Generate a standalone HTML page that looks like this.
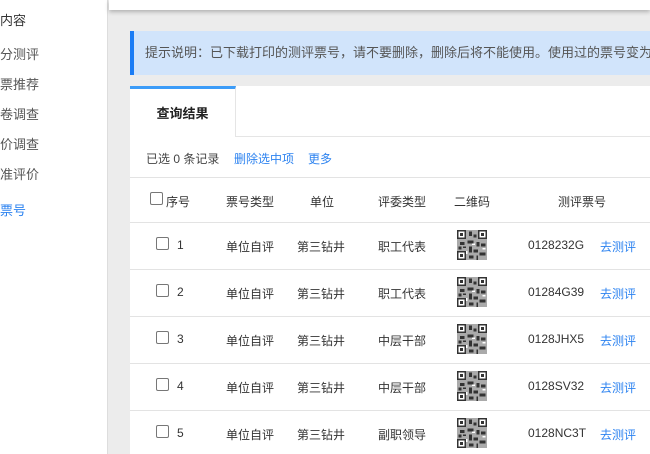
<!DOCTYPE html>
<html><head><meta charset="utf-8"><style>
*{margin:0;padding:0;box-sizing:border-box}
body{width:650px;height:454px;overflow:hidden;background:#ececec;font-family:"Liberation Sans","Noto Sans CJK SC",sans-serif;font-size:12px;color:#333;position:relative}
.a{position:absolute;white-space:nowrap}
.side{position:absolute;left:0;top:0;width:108px;height:454px;background:#fff;border-right:1px solid #ddd}
.side div{position:absolute;left:0;font-size:13px;color:#555}
.top{position:absolute;left:109px;top:0;width:541px;height:10px;background:#fff;box-shadow:0 2px 4px rgba(0,0,0,.25)}
.alert{position:absolute;left:130px;top:31px;width:520px;height:44px;background:#d1e4fb;border-left:4px solid #1a7cf5;font-size:13px;color:#555;line-height:44px;padding-left:11px;white-space:nowrap;overflow:hidden}
.card{position:absolute;left:130px;top:86px;width:520px;height:368px;background:#fff}
.tab{position:absolute;left:0;top:0;width:106px;height:51px;border-top:3px solid #3c9cf8;border-right:1px solid #e5e5e5;background:#fff;font-size:13px;font-weight:bold;color:#222;text-align:center;line-height:50px}
.tabline{position:absolute;left:106px;top:50px;width:414px;height:1px;background:#e5e5e5}
.line{position:absolute;left:0;width:520px;height:1px;background:#e3e3e3}
.cb{position:absolute;width:13px;height:13px;border:1px solid #777;border-radius:2px;background:#fff}
.blue{color:#2d83f0}
.qr{position:absolute;left:327px;width:30px;height:30px}
</style></head><body>
<div class="side">
<div style="top:10px;color:#333">内容</div>
<div style="top:44px">分测评</div>
<div style="top:74px">票推荐</div>
<div style="top:104px">卷调查</div>
<div style="top:134px">价调查</div>
<div style="top:164px">准评价</div>
<div style="top:200px;color:#2d83f0">票号</div>
</div>
<div class="top"></div>
<div class="alert">提示说明：已下载打印的测评票号，请不要删除，删除后将不能使用。使用过的票号变为</div>
<svg width="0" height="0" style="position:absolute"><defs><symbol id="q" viewBox="0 0 20 20">
<rect width="20" height="20" fill="#aaa"/>
<g fill="#333"><rect x="0" y="0" width="6" height="6"/><rect x="14" y="0" width="6" height="6"/><rect x="0" y="14" width="6" height="6"/>
<rect x="8" y="1" width="2" height="3"/><rect x="11" y="3" width="2" height="2"/><rect x="2" y="8" width="3" height="2"/><rect x="7" y="7" width="4" height="2"/><rect x="13" y="8" width="2" height="3"/><rect x="16" y="9" width="3" height="2"/><rect x="8" y="11" width="2" height="4"/><rect x="11" y="13" width="3" height="2"/><rect x="15" y="15" width="4" height="2"/><rect x="8" y="17" width="3" height="2"/><rect x="13" y="17" width="1" height="3"/><rect x="1" y="11" width="2" height="2"/><rect x="4" y="11" width="2" height="1"/></g>
<g fill="#fff"><rect x="1" y="1" width="4" height="4"/><rect x="15" y="1" width="4" height="4"/><rect x="1" y="15" width="4" height="4"/><rect x="10" y="9" width="2" height="1"/><rect x="6" y="14" width="1" height="2"/><rect x="17" y="12" width="2" height="1"/></g>
<g fill="#333"><rect x="2" y="2" width="2" height="2"/><rect x="16" y="2" width="2" height="2"/><rect x="2" y="16" width="2" height="2"/></g>
</symbol></defs></svg>
<div class="card">
<div class="tab">查询结果</div><div class="tabline"></div>
<div class="a" style="left:16px;top:64px;color:#444">已选 0 条记录</div>
<div class="a blue" style="left:104px;top:64px">删除选中项</div>
<div class="a blue" style="left:178px;top:64px">更多</div>
<div class="line" style="top:91px"></div>
<div class="cb" style="left:20px;top:106px"></div>
<div class="a" style="left:36px;top:107px">序号</div>
<div class="a" style="left:96px;top:107px">票号类型</div>
<div class="a" style="left:180px;top:107px">单位</div>
<div class="a" style="left:248px;top:107px">评委类型</div>
<div class="a" style="left:324px;top:107px">二维码</div>
<div class="a" style="left:428px;top:107px">测评票号</div>
<div class="line" style="top:136px"></div>
</div>
<div id="rows"></div>
<script>
var d=[["1","职工代表","0128232G"],["2","职工代表","01284G39"],["3","中层干部","0128JHX5"],["4","中层干部","0128SV32"],["5","副职领导","0128NC3T"]];
var h="";d.forEach(function(r,i){var t=86+136+i*47;
h+='<div class="cb" style="left:'+(130+26)+'px;top:'+(t+15)+'px"></div>';
h+='<div class="a" style="left:177px;top:'+(t+16)+'px">'+r[0]+'</div>';
h+='<div class="a" style="left:226px;top:'+(t+16)+'px">单位自评</div>';
h+='<div class="a" style="left:297px;top:'+(t+16)+'px">第三钻井</div>';
h+='<div class="a" style="left:378px;top:'+(t+16)+'px">'+r[1]+'</div>';
h+='<svg class="qr" style="left:457px;top:'+(t+8)+'px"><use href="#q"/></svg>';
h+='<div class="a" style="left:528px;top:'+(t+16)+'px">'+r[2]+'</div>';
h+='<div class="a blue" style="left:600px;top:'+(t+16)+'px">去测评</div>';
if(i<4)h+='<div class="a" style="left:130px;width:520px;height:1px;background:#e3e3e3;top:'+(t+47)+'px"></div>';});
document.getElementById("rows").innerHTML=h;
</script>
</body></html>
